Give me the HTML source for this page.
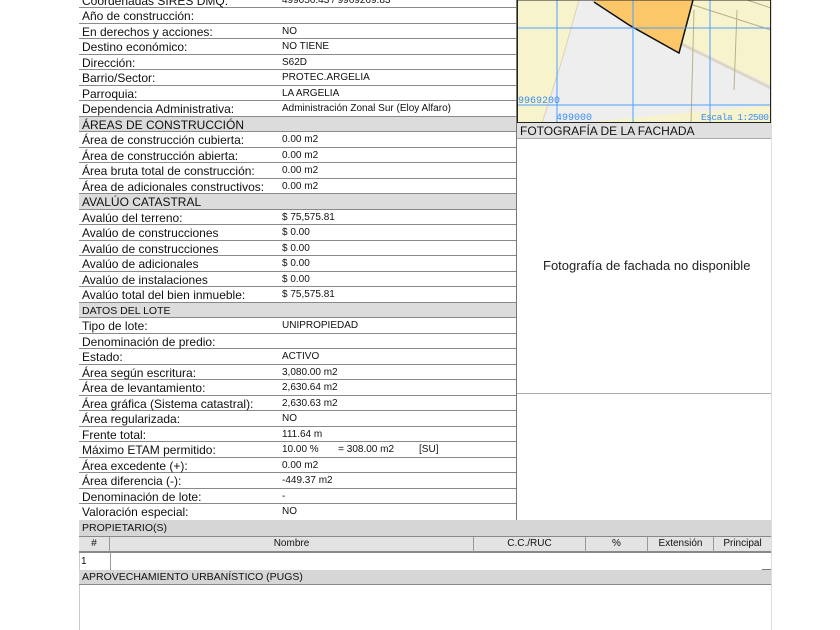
<!DOCTYPE html>
<html><head><meta charset="utf-8"><style>
*{margin:0;padding:0;box-sizing:border-box}
body{width:840px;height:630px;overflow:hidden;background:#fff;font-family:"Liberation Sans",Arial,sans-serif;color:#111;position:relative}
.r{position:absolute;left:79px;width:437px;height:15.5px;border-bottom:1px solid #8a8a8a;background:#fff}
.r .l{position:absolute;left:3px;top:1px;font-size:12px;white-space:nowrap}
.r .v{position:absolute;left:203px;top:2px;font-size:10px;white-space:nowrap}
.h{background:#dcdcdc}
.h .l{font-size:12px}
.s .l{font-size:10.5px;top:2px}
.bar{position:absolute;left:79px;width:692px;background:#d6d6d6;border-bottom:1px solid #888;font-size:10.5px;padding-left:3px}
.th{position:absolute;top:537px;height:16px;background:#e3e3e3;border-right:1px solid #999;border-bottom:2px solid #888;font-size:10px;text-align:center;line-height:14px}
</style></head><body>
<div style="position:absolute;left:79px;top:0;width:1px;height:630px;background:#ccc"></div>
<div style="position:absolute;left:771px;top:0;width:1px;height:630px;background:#ddd"></div>

<div class="r" style="top:-7.5px"><span class="l">Coordenadas SIRES DMQ:</span><span class="v">499056.43 / 9969269.83</span></div>
<div class="r" style="top:8px"><span class="l">Año de construcción:</span></div>
<div class="r" style="top:23.5px"><span class="l">En derechos y acciones:</span><span class="v">NO</span></div>
<div class="r" style="top:39px"><span class="l">Destino económico:</span><span class="v">NO TIENE</span></div>
<div class="r" style="top:54.5px"><span class="l">Dirección:</span><span class="v">S62D</span></div>
<div class="r" style="top:70px"><span class="l">Barrio/Sector:</span><span class="v">PROTEC.ARGELIA</span></div>
<div class="r" style="top:85.5px"><span class="l">Parroquia:</span><span class="v">LA ARGELIA</span></div>
<div class="r" style="top:101px"><span class="l">Dependencia Administrativa:</span><span class="v">Administración Zonal Sur (Eloy Alfaro)</span></div>
<div class="r h" style="top:116.5px"><span class="l">ÁREAS DE CONSTRUCCIÓN</span></div>
<div class="r" style="top:132px"><span class="l">Área de construcción cubierta:</span><span class="v">0.00 m2</span></div>
<div class="r" style="top:147.5px"><span class="l">Área de construcción abierta:</span><span class="v">0.00 m2</span></div>
<div class="r" style="top:163px"><span class="l">Área bruta total de construcción:</span><span class="v">0.00 m2</span></div>
<div class="r" style="top:178.5px"><span class="l">Área de adicionales constructivos:</span><span class="v">0.00 m2</span></div>
<div class="r h" style="top:194px"><span class="l">AVALÚO CATASTRAL</span></div>
<div class="r" style="top:209.5px"><span class="l">Avalúo del terreno:</span><span class="v">$ 75,575.81</span></div>
<div class="r" style="top:225px"><span class="l">Avalúo de construcciones</span><span class="v">$ 0.00</span></div>
<div class="r" style="top:240.5px"><span class="l">Avalúo de construcciones</span><span class="v">$ 0.00</span></div>
<div class="r" style="top:256px"><span class="l">Avalúo de adicionales</span><span class="v">$ 0.00</span></div>
<div class="r" style="top:271.5px"><span class="l">Avalúo de instalaciones</span><span class="v">$ 0.00</span></div>
<div class="r" style="top:287px"><span class="l">Avalúo total del bien inmueble:</span><span class="v">$ 75,575.81</span></div>
<div class="r h s" style="top:302.5px"><span class="l">DATOS DEL LOTE</span></div>
<div class="r" style="top:318px"><span class="l">Tipo de lote:</span><span class="v">UNIPROPIEDAD</span></div>
<div class="r" style="top:333.5px"><span class="l">Denominación de predio:</span></div>
<div class="r" style="top:349px"><span class="l">Estado:</span><span class="v">ACTIVO</span></div>
<div class="r" style="top:364.5px"><span class="l">Área según escritura:</span><span class="v">3,080.00 m2</span></div>
<div class="r" style="top:380px"><span class="l">Área de levantamiento:</span><span class="v">2,630.64 m2</span></div>
<div class="r" style="top:395.5px"><span class="l">Área gráfica (Sistema catastral):</span><span class="v">2,630.63 m2</span></div>
<div class="r" style="top:411px"><span class="l">Área regularizada:</span><span class="v">NO</span></div>
<div class="r" style="top:426.5px"><span class="l">Frente total:</span><span class="v">111.64 m</span></div>
<div class="r" style="top:442px"><span class="l">Máximo ETAM permitido:</span><span class="v">10.00 %&nbsp;&nbsp;&nbsp;&nbsp;&nbsp;&nbsp;&nbsp;= 308.00 m2&nbsp;&nbsp;&nbsp;&nbsp;&nbsp;&nbsp;&nbsp;&nbsp;&nbsp;[SU]</span></div>
<div class="r" style="top:457.5px"><span class="l">Área excedente (+):</span><span class="v">0.00 m2</span></div>
<div class="r" style="top:473px"><span class="l">Área diferencia (-):</span><span class="v">-449.37 m2</span></div>
<div class="r" style="top:488.5px"><span class="l">Denominación de lote:</span><span class="v">-</span></div>
<div class="r" style="top:504px;border-bottom:none"><span class="l">Valoración especial:</span><span class="v">NO</span></div>
<div style="position:absolute;left:516px;top:0;width:1px;height:521px;background:#777"></div>

<!-- map -->
<svg style="position:absolute;left:517px;top:0" width="254" height="123" viewBox="0 0 254 123">
<rect width="254" height="123" fill="#f7f3cc"/>
<path d="M72 0 L254 85 L254 105 L60 123 L25 123 L45 60 L62 0 Z" fill="#eeeeee"/>
<path d="M62 0 L45 60 L25 123" stroke="#ddd2b8" fill="none"/>
<path d="M75 0 L254 88" stroke="#ddd6c8" stroke-width="3" fill="none"/>
<path d="M77 0 L112 25 L162 53 L176 0 Z" fill="#fbc768"/>
<path d="M77 2 L112 25 L162 53 L176 0" stroke="#111" stroke-width="1.5" fill="none"/>
<path d="M177 10 L174 123 M220 10 L217 90 M176 5 L254 30 M230 0 L254 8" stroke="#bbb08a" fill="none"/>
<path d="M40 0 V123 M116 0 V123 M193 0 V123 M0 28 H254 M0 105 H254" stroke="#4aa0ff" stroke-width="1"/>
<text x="1" y="103" font-family="Liberation Mono,monospace" font-size="10" fill="#3a8ef0">9969200</text>
<text x="39" y="120" font-family="Liberation Mono,monospace" font-size="10" fill="#3a8ef0">499000</text>
<text x="184" y="120" font-family="Liberation Mono,monospace" font-size="9.5" fill="#3a8ef0" textLength="68">Escala 1:2500</text>
<rect x="0.5" y="0" width="253" height="122.5" fill="none" stroke="#222"/>
</svg>
<div style="position:absolute;left:517px;top:123px;width:254px;height:16px;background:#e0e0e0;font-size:12px;padding-left:3px;line-height:16px;border-bottom:1px solid #aaa">FOTOGRAFÍA DE LA FACHADA</div>
<div style="position:absolute;left:543px;top:258px;font-family:'Liberation Sans',sans-serif;font-size:13px;color:#222">Fotografía de fachada no disponible</div>
<div style="position:absolute;left:517px;top:393px;width:254px;height:1px;background:#aaa"></div>

<div class="bar" style="top:520px;height:17px;line-height:16px">PROPIETARIO(S)</div>
<div class="th" style="left:79px;width:31px">#</div>
<div class="th" style="left:110px;width:364px">Nombre</div>
<div class="th" style="left:474px;width:112px">C.C./RUC</div>
<div class="th" style="left:586px;width:62px">%</div>
<div class="th" style="left:648px;width:66px">Extensión</div>
<div class="th" style="left:714px;width:57px;border-right:none">Principal</div>
<div style="position:absolute;left:81px;top:556px;font-size:10px">1</div>
<div style="position:absolute;left:110px;top:553px;width:1px;height:17px;background:#999"></div>
<div style="position:absolute;left:762px;top:569px;width:9px;height:1px;background:#777"></div>
<div class="bar" style="top:570px;height:15px;line-height:14px">APROVECHAMIENTO URBANÍSTICO (PUGS)</div>
</body></html>
